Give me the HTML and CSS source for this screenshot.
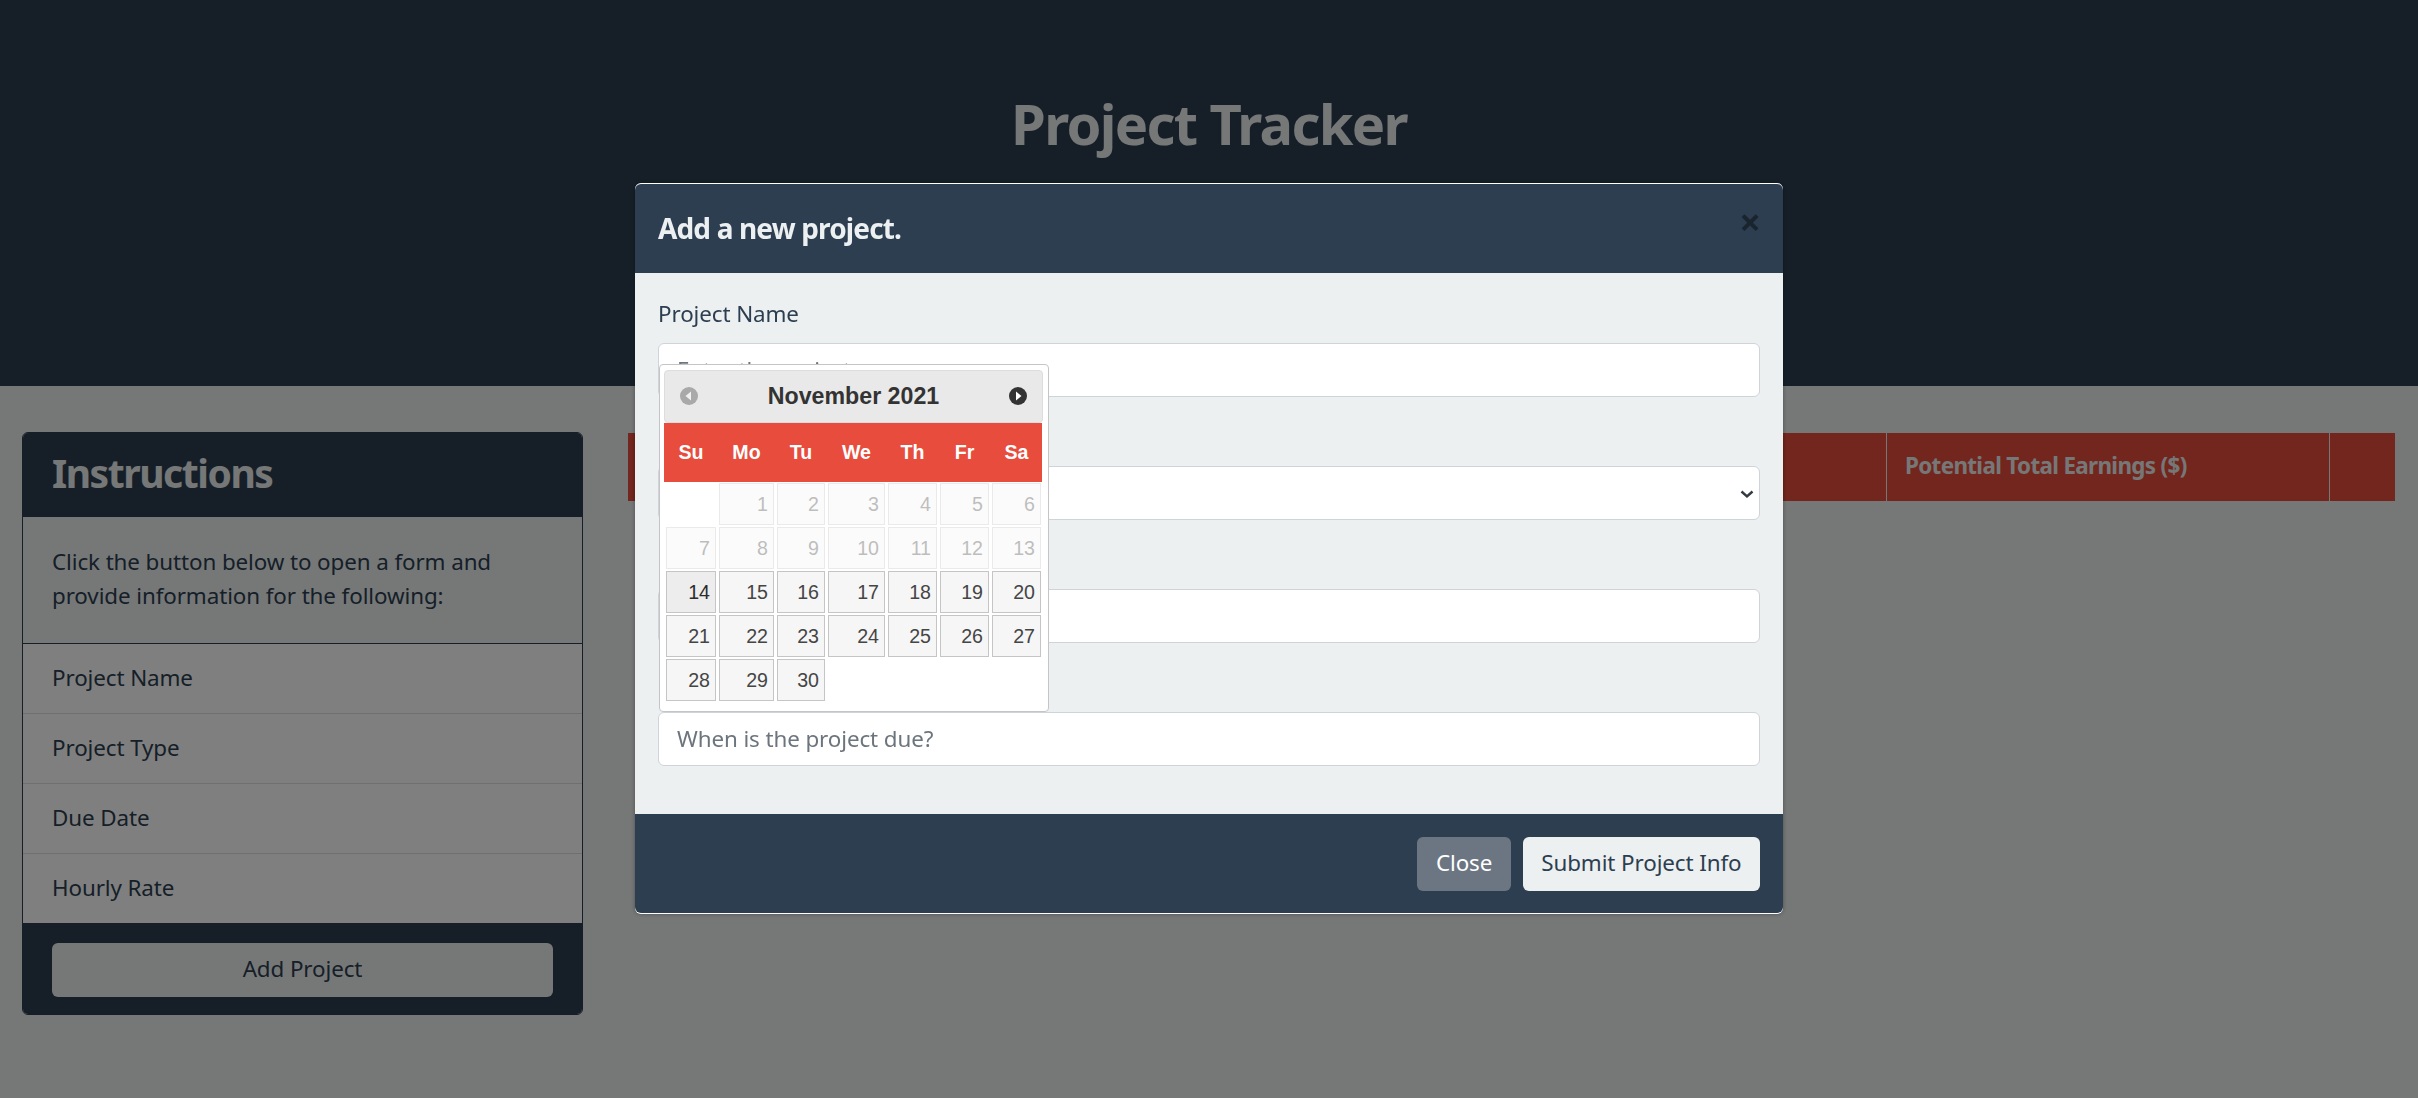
FILE: index.html
```html
<!DOCTYPE html>
<html lang="en">
<head>
  <meta charset="UTF-8">
  <meta name="viewport" content="width=device-width, initial-scale=1.0">
  <title>Project Tracker</title>
  <link rel="stylesheet" href="styles.css">
</head>
<body>
  <header class="hero">
    <h1>Project Tracker</h1>
    <p class="hero-sub">Stay on your Time Summary</p>
  </header>

  <main class="content">
    <section class="card">
      <h2 class="card-head">Instructions</h2>
      <p class="card-text">Click the button below to open a form and provide information for the following:</p>
      <ul class="card-list">
        <li>Project Name</li>
        <li>Project Type</li>
        <li>Due Date</li>
        <li>Hourly Rate</li>
      </ul>
      <div class="card-foot">
        <button class="btn btn-light btn-wide" type="button">Add Project</button>
      </div>
    </section>

    <div class="table-head">
      <div class="th"></div>
      <div class="th">Potential Total Earnings ($)</div>
      <div class="th"></div>
    </div>
  </main>

  <div class="overlay">
    <div class="modal">
      <div class="modal-head">
        <h3>Add a new project.</h3>
        <span class="modal-x">&times;</span>
      </div>

      <form class="modal-body">
        <div class="field">
          <label for="name">Project Name</label>
          <input id="name" type="text" placeholder="Enter the project name">
        </div>
        <div class="field">
          <label for="type">Project Type</label>
          <div class="select-wrap">
            <select id="type">
              <option>Select the project type</option>
            </select>
            <svg class="chevron" width="14" height="10" viewBox="0 0 14 10"><path d="M1.5 2.5 7 7.5l5.5-5" fill="none" stroke="#343a40" stroke-width="2.4"/></svg>
          </div>
        </div>
        <div class="field">
          <label for="rate">Hourly Rate</label>
          <input id="rate" type="text" placeholder="Enter the hourly rate">
        </div>
        <div class="field">
          <label for="due">Due Date</label>
          <input id="due" type="text" placeholder="When is the project due?">
        </div>
      </form>

      <div class="modal-foot">
        <button class="btn btn-grey" type="button">Close</button>
        <button class="btn btn-light" type="button">Submit Project Info</button>
      </div>

      <div class="calendar">
        <div class="cal-title">
          <svg class="cal-nav off" width="18" height="18" viewBox="0 0 18 18"><circle cx="9" cy="9" r="9"/><path d="M11 4.5v9L5.5 9z" fill="#fff"/></svg>
          <span>November 2021</span>
          <svg class="cal-nav" width="18" height="18" viewBox="0 0 18 18"><circle cx="9" cy="9" r="9"/><path d="M7 4.5v9L12.5 9z" fill="#fff"/></svg>
        </div>
        <div class="cal-days">
          <span>Su</span><span>Mo</span><span>Tu</span><span>We</span><span>Th</span><span>Fr</span><span>Sa</span>
        </div>
        <div class="cal-grid">
          <span class="blank"></span>
          <a class="off">1</a><a class="off">2</a><a class="off">3</a><a class="off">4</a><a class="off">5</a><a class="off">6</a>
          <a class="off">7</a><a class="off">8</a><a class="off">9</a><a class="off">10</a><a class="off">11</a><a class="off">12</a><a class="off">13</a>
          <a class="today">14</a><a>15</a><a>16</a><a>17</a><a>18</a><a>19</a><a>20</a>
          <a>21</a><a>22</a><a>23</a><a>24</a><a>25</a><a>26</a><a>27</a>
          <a>28</a><a>29</a><a>30</a>
        </div>
      </div>
    </div>
  </div>
</body>
</html>
```

FILE: styles.css
```css
html, body {
  height: 100%;
  margin: 0;
  padding: 0;
}

body {
  font-family: "Noto Sans", "Open Sans", sans-serif;
  font-size: 22.4px;
  line-height: 1.5;
  letter-spacing: -0.1px;
  color: #2c3e50;
  background-color: #ecf0f1;
  overflow: hidden;
}

h1, h2, h3, p, ul {
  margin: 0;
  padding: 0;
}

.hero {
  height: 386px;
  box-sizing: border-box;
  padding-top: 81px;
  background-color: #2c3e50;
  color: #ecf0f1;
  text-align: center;
}

.hero h1 {
  font-size: 56px;
  line-height: 84px;
  font-weight: 700;
  letter-spacing: -1.65px;
}

.hero-sub {
  font-size: 29px;
  line-height: 34px;
  margin-top: 14px;
}

.content {
  display: flex;
  align-items: flex-start;
  gap: 45px;
  padding: 46px 23px 0 22px;
}

.card {
  width: 561px;
  flex: none;
  box-sizing: border-box;
  border: 1px solid #2c3e50;
  border-radius: 6px;
  overflow: hidden;
  background-color: #ecf0f1;
}

.card-head {
  height: 84px;
  box-sizing: border-box;
  padding: 0 29px;
  background-color: #2c3e50;
  color: #ecf0f1;
  font-size: 39px;
  line-height: 80px;
  font-weight: 700;
  letter-spacing: -1.45px;
}

.card-text {
  height: 126px;
  box-sizing: border-box;
  padding: 28px 29px 0;
  line-height: 34px;
}

.card-list {
  list-style: none;
  border-top: 1px solid #2c3e50;
  background-color: #fff;
}

.card-list li {
  height: 70px;
  box-sizing: border-box;
  padding: 0 29px;
  line-height: 68px;
  border-bottom: 1px solid #dfdfdf;
}

.card-list li:last-child {
  height: 69px;
  border-bottom: none;
}

.card-foot {
  padding: 20px 29px 17px;
  background-color: #2c3e50;
}

.btn {
  height: 54px;
  box-sizing: border-box;
  padding: 0 18.5px 3px;
  border: none;
  border-radius: 6px;
  font-family: inherit;
  font-size: 22.4px;
  letter-spacing: inherit;
  cursor: pointer;
}

.btn-wide {
  display: block;
  width: 100%;
}

.btn-light {
  background-color: #ecf0f1;
  color: #2c3e50;
}

.btn-grey {
  background-color: #6c7683;
  color: #fff;
}

.table-head {
  flex: 1;
  display: grid;
  grid-template-columns: 1fr 443px 65px;
  height: 68px;
  margin-top: 1px;
  background-color: #e74c3c;
}

.th {
  padding-left: 18px;
  border-right: 1px solid #ecf0f1;
  color: #ecf0f1;
  font-weight: 700;
  font-size: 22.4px;
  line-height: 66px;
  letter-spacing: -0.65px;
}

.th:last-child {
  border-right: none;
}

.overlay {
  position: fixed;
  inset: 0;
  display: flex;
  justify-content: center;
  align-items: flex-start;
  padding-top: 183px;
  background-color: rgba(0, 0, 0, 0.5);
}

.modal {
  position: relative;
  width: 1148px;
  padding: 1px 0;
  border-radius: 6px;
  background-color: #fff;
  box-shadow: 0 0 4px rgba(0, 0, 0, 0.35);
}

.modal-head {
  display: flex;
  justify-content: space-between;
  height: 89px;
  padding: 0 22px 0 23px;
  border-radius: 6px 6px 0 0;
  background-color: #2c3e50;
}

.modal-head h3 {
  color: #ecf0f1;
  font-size: 28px;
  line-height: 88px;
  font-weight: 700;
  letter-spacing: -0.85px;
}

.modal-x {
  font-size: 38px;
  font-weight: 700;
  line-height: 74px;
  color: #1a242e;
}

.modal-body {
  display: block;
  height: 541px;
  box-sizing: border-box;
  padding: 25px 23px 0;
  background-color: #ecf0f1;
}

.field {
  margin-bottom: 24px;
}

.field label {
  display: block;
  height: 34px;
  margin-bottom: 11px;
  line-height: 32px;
}

.field input, .field select {
  display: block;
  width: 100%;
  height: 54px;
  box-sizing: border-box;
  padding: 0 18px 2px;
  border: 1px solid #ced4da;
  border-radius: 6px;
  background-color: #fff;
  color: #2c3e50;
  font-family: inherit;
  font-size: 22.4px;
  letter-spacing: inherit;
  appearance: none;
}

.field input::placeholder {
  color: #6c757d;
  opacity: 1;
}

.select-wrap {
  position: relative;
}

.chevron {
  position: absolute;
  right: 6px;
  top: 23px;
}

.modal-foot {
  display: flex;
  justify-content: flex-end;
  gap: 12px;
  height: 99px;
  box-sizing: border-box;
  padding: 23px 23px 0;
  border-radius: 0 0 6px 6px;
  background-color: #2c3e50;
}

.calendar {
  position: absolute;
  left: 24px;
  top: 181px;
  width: 390px;
  box-sizing: border-box;
  padding: 5px 5px 10px 4px;
  border: 1px solid #c5c5c5;
  border-radius: 4px;
  background-color: #fff;
  font-family: "Liberation Sans", Arial, sans-serif;
  font-size: 19.6px;
  letter-spacing: 0;
}

.cal-title {
  display: flex;
  justify-content: space-between;
  align-items: center;
  height: 53px;
  box-sizing: border-box;
  padding: 0 15px 2px;
  border: 1px solid #ddd;
  border-radius: 4px;
  background-color: #e9e9e9;
  color: #333;
  font-size: 23.2px;
  font-weight: 700;
}

.cal-title span {
  padding-top: 2px;
}

.cal-nav {
  fill: #333;
}

.cal-nav.off {
  opacity: 0.35;
}

.cal-days, .cal-grid {
  display: grid;
  grid-template-columns: 50px 55px 48px 57px 49px 49px 49px;
  column-gap: 3px;
  padding: 0 2px;
}

.cal-days {
  height: 59px;
  width: 378px;
  box-sizing: border-box;
  background-color: #e74c3c;
  color: #fff;
  font-weight: 700;
  text-align: center;
  line-height: 59px;
}

.cal-grid {
  grid-auto-rows: 42px;
  row-gap: 2px;
  margin-top: 1px;
}

.cal-grid a {
  box-sizing: border-box;
  padding-right: 5px;
  border: 1px solid #c5c5c5;
  background-color: #f6f6f6;
  color: #454545;
  text-align: right;
  line-height: 41px;
}

.cal-grid a.off {
  opacity: 0.35;
}

.cal-grid a.today {
  background-color: #ededed;
  color: #2b2b2b;
}
```
